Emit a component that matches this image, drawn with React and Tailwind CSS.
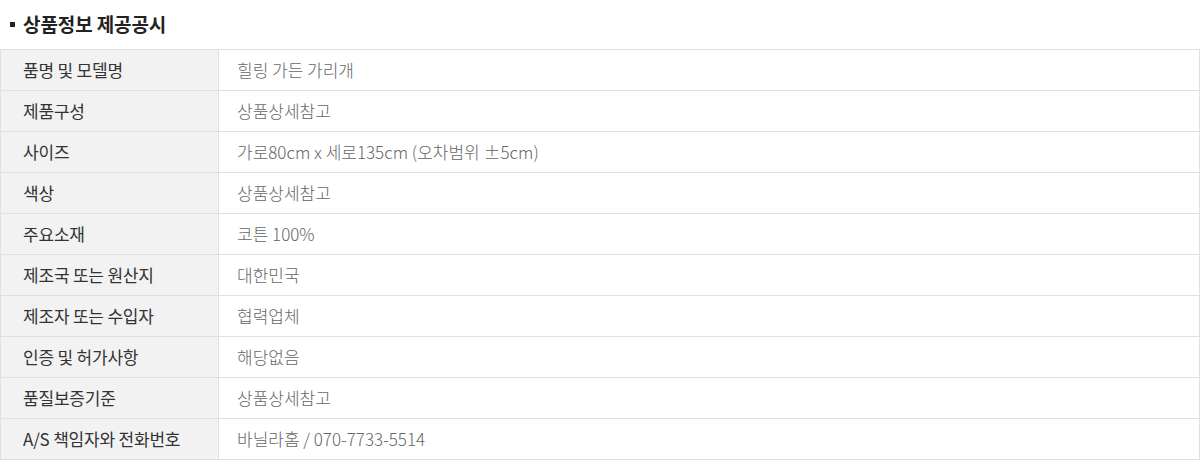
const rows = [
  ["품명 및 모델명", "힐링 가든 가리개"],
  ["제품구성", "상품상세참고"],
  ["사이즈", "가로80cm x 세로135cm (오차범위 ±5cm)"],
  ["색상", "상품상세참고"],
  ["주요소재", "코튼 100%"],
  ["제조국 또는 원산지", "대한민국"],
  ["제조자 또는 수입자", "협력업체"],
  ["인증 및 허가사항", "해당없음"],
  ["품질보증기준", "상품상세참고"],
  ["A/S 책임자와 전화번호", "바닐라홈 / 070-7733-5514"],
];

export default function App() {
  return (
    <div
      className="w-[1200px] h-[475px] bg-white"
      style={{ fontFamily: '"Noto Sans CJK KR", "Noto Sans", sans-serif' }}
    >
      <div className="flex items-center h-[49px] pl-[10px] pb-[1px]">
        <span className="w-[5px] h-[5px] bg-[#222] mr-[8px]" />
        <h2 className="text-[19px] font-bold text-[#222] tracking-[-0.1px]">상품정보 제공공시</h2>
      </div>
      <div className="border-t border-l border-r border-[#e0e0e0] w-[1200px]">
        {rows.map(([label, value]) => (
          <div key={label} className="flex h-[41px] border-b border-[#e0e0e0]">
            <div className="w-[218px] shrink-0 bg-[#f2f2f2] border-r border-[#e0e0e0] flex items-center pl-[22px] text-[17px] text-[#333] tracking-[-0.2px]">
              {label}
            </div>
            <div className="flex-1 flex items-center pl-[18px] text-[17px] font-light text-[#666]">
              {value}
            </div>
          </div>
        ))}
      </div>
    </div>
  );
}
